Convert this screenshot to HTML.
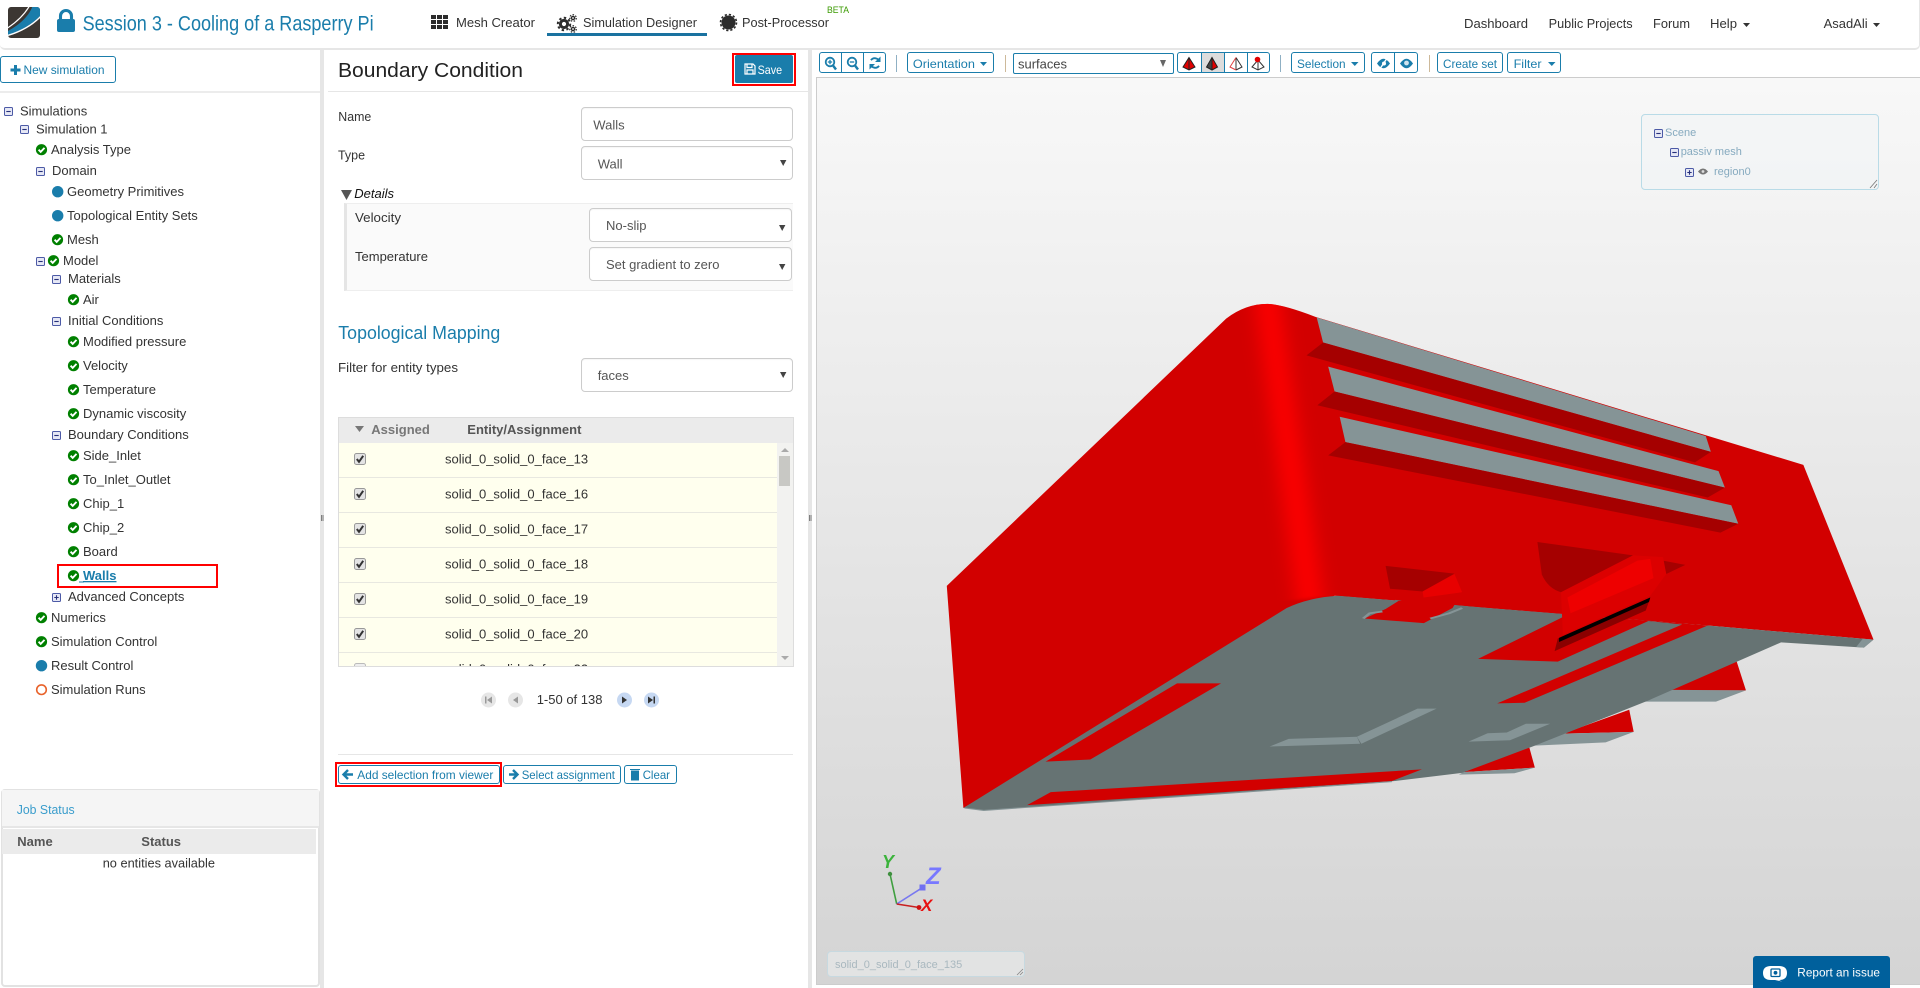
<!DOCTYPE html>
<html lang="en">
<head>
<meta charset="utf-8">
<title>Session 3 - Cooling of a Rasperry Pi</title>
<style>
html,body{margin:0;padding:0;width:1920px;height:988px;overflow:hidden;background:#fff}
body{position:relative;font-family:"Liberation Sans",sans-serif;font-size:13px;color:#333}
.b{position:absolute;box-sizing:border-box}
.btn{border:1px solid #1a7dab;border-radius:3px;background:#fff}
.field{border:1px solid #ccc;border-radius:4px;background:#fff;box-shadow:inset 0 1px 1px rgba(0,0,0,.04)}
.row{left:339px;width:438px;height:35px;background:#ffffee;border-bottom:1px solid #e8e8e0}
svg.ov{position:absolute;left:0;top:0}
svg text{font-family:"Liberation Sans",sans-serif;font-size:13px;fill:#333}
.bl{fill:#1a7dab !important;font-size:12px !important}
.hb{font-weight:bold}
</style>
</head>
<body>
<!-- header -->
<div class="b" style="left:0;top:0;width:1920px;height:50px;background:#fff;border-bottom:2px solid #e6e6e6;border-right:1px solid #e6e6e6;border-radius:0 0 5px 5px"></div>
<div class="b" style="left:547px;top:33px;width:160px;height:3px;background:#1a72a0"></div>
<!-- splitters -->
<div class="b" style="left:320px;top:50px;width:4px;height:938px;background:#e6e6e6"></div>
<div class="b" style="left:808px;top:50px;width:4px;height:938px;background:#e6e6e6"></div>
<div class="b" style="left:0;top:91px;width:320px;height:2px;background:#ececec"></div>
<div class="b" style="left:328px;top:91px;width:480px;height:1px;background:#e6e6e6"></div>
<!-- left -->
<div class="b btn" style="left:0;top:56px;width:116px;height:27px"></div>
<div class="b" style="left:1px;top:789px;width:319px;height:198px;border:2px solid #e2e2e2;border-radius:4px;background:#fff"></div>
<div class="b" style="left:2px;top:790px;width:317px;height:38px;background:#f5f5f5;border-bottom:2px solid #e6e6e6"></div>
<div class="b" style="left:2px;top:829px;width:314px;height:25px;background:#ebebeb"></div>
<div class="b" style="left:57px;top:564px;width:161px;height:24px;border:2px solid #f00"></div>
<!-- center -->
<div class="b" style="left:732px;top:53px;width:64px;height:33px;border:2px solid #f00"></div>
<div class="b" style="left:735px;top:55px;width:58px;height:28px;background:#1a7dab;border-radius:2px"></div>
<div class="b field" style="left:581px;top:107px;width:212px;height:34px"></div>
<div class="b field" style="left:581px;top:146px;width:212px;height:34px"></div>
<div class="b" style="left:344px;top:203px;width:449px;height:88px;background:#fafafa;border-left:3px solid #e5e5e5;border-top:1px solid #eee;border-bottom:1px solid #eee"></div>
<div class="b field" style="left:589px;top:208px;width:203px;height:34px"></div>
<div class="b field" style="left:589px;top:247px;width:203px;height:34px"></div>
<div class="b field" style="left:581px;top:358px;width:212px;height:34px"></div>
<!-- table -->
<div class="b" style="left:338px;top:417px;width:456px;height:250px;border:1px solid #ddd;overflow:hidden;background:#fff">
  <div class="b" style="left:0;top:0;width:454px;height:25px;background:#ebebeb"></div>
  <div class="b row" style="left:0;top:25px"></div>
  <div class="b row" style="left:0;top:60px"></div>
  <div class="b row" style="left:0;top:95px"></div>
  <div class="b row" style="left:0;top:130px"></div>
  <div class="b row" style="left:0;top:165px"></div>
  <div class="b row" style="left:0;top:200px"></div>
  <div class="b" style="left:0;top:235px;width:438px;height:15px;background:#ffffee"></div>
  <div class="b" style="left:438px;top:25px;width:16px;height:225px;background:#f2f2f0"></div>
  <div class="b" style="left:440px;top:38px;width:11px;height:30px;background:#c8c8c4"></div>
</div>
<div class="b" style="left:338px;top:754px;width:455px;height:1px;background:#e6e6e6"></div>
<div class="b" style="left:335px;top:762px;width:167px;height:25px;border:2px solid #f00"></div>
<div class="b btn" style="left:338px;top:765px;width:162px;height:19px"></div>
<div class="b btn" style="left:503px;top:765px;width:118px;height:19px"></div>
<div class="b btn" style="left:624px;top:765px;width:53px;height:19px"></div>
<!-- toolbar -->
<div class="b btn" style="left:819px;top:52px;width:67px;height:21px"></div>
<div class="b" style="left:841px;top:52px;width:1px;height:21px;background:#1a7dab"></div>
<div class="b" style="left:863px;top:52px;width:1px;height:21px;background:#1a7dab"></div>
<div class="b" style="left:896px;top:55px;width:1px;height:17px;background:#8fb0c4"></div>
<div class="b btn" style="left:907px;top:52px;width:87px;height:21px"></div>
<div class="b" style="left:1005px;top:55px;width:1px;height:17px;background:#cdb99a"></div>
<div class="b btn" style="left:1013px;top:53px;width:161px;height:21px;border-radius:2px"></div>
<div class="b btn" style="left:1177px;top:52px;width:93px;height:21px"></div>
<div class="b" style="left:1201px;top:53px;width:23px;height:19px;background:#dcdcdc"></div>
<div class="b" style="left:1201px;top:52px;width:1px;height:21px;background:#1a7dab"></div>
<div class="b" style="left:1224px;top:52px;width:1px;height:21px;background:#1a7dab"></div>
<div class="b" style="left:1247px;top:52px;width:1px;height:21px;background:#1a7dab"></div>
<div class="b" style="left:1280px;top:55px;width:1px;height:17px;background:#8fb0c4"></div>
<div class="b btn" style="left:1291px;top:52px;width:74px;height:21px"></div>
<div class="b btn" style="left:1371px;top:52px;width:47px;height:21px"></div>
<div class="b" style="left:1394px;top:52px;width:1px;height:21px;background:#1a7dab"></div>
<div class="b" style="left:1429px;top:55px;width:1px;height:17px;background:#cdb99a"></div>
<div class="b btn" style="left:1437px;top:52px;width:66px;height:21px"></div>
<div class="b btn" style="left:1507px;top:52px;width:54px;height:21px"></div>
<!-- viewer -->
<div class="b" style="left:816px;top:77px;width:1104px;height:908px;border:1px solid #ccc;border-right:0;background:linear-gradient(#f8f8f8,#d4d4d4)"></div>
<div class="b" style="left:1641px;top:114px;width:238px;height:76px;border:1px solid #b9dbe7;border-radius:4px;background:rgba(240,244,245,.55)"></div>
<div class="b" style="left:827px;top:951px;width:198px;height:26px;border:1px solid #c7d9e0;border-radius:4px;background:#e2e3e3"></div>
<div class="b" style="left:1753px;top:956px;width:137px;height:32px;background:#00609c;border-radius:3px 3px 0 0"></div>

<svg class="ov" width="1920" height="988" viewBox="0 0 1920 988" xmlns="http://www.w3.org/2000/svg">
<defs>
  <g id="m"><rect x=".5" y=".5" width="8" height="8" rx="1" fill="#e6e8f5" stroke="#4c5aa6"/><path d="M2.3 4.5h4.4" stroke="#26307a" stroke-width="1.1"/></g>
  <g id="p"><rect x=".5" y=".5" width="8" height="8" rx="1" fill="#e6e8f5" stroke="#4c5aa6"/><path d="M2.3 4.5h4.4M4.5 2.3v4.4" stroke="#26307a" stroke-width="1.1"/></g>
  <g id="c"><circle r="5.6" fill="#008000"/><path d="M-2.9 0 L-.8 2.2 L3 -1.8" fill="none" stroke="#fff" stroke-width="1.9"/></g>
  <g id="d"><circle r="5.7" fill="#1a7dab"/></g>
  <g id="k"><rect x=".5" y=".5" width="11" height="11" rx="2" fill="#e4e4e4" stroke="#999"/><path d="M2.8 6 L5 8.8 L9.2 2.8" fill="none" stroke="#333" stroke-width="2"/></g>
  <filter id="bl" x="-60%" y="-10%" width="220%" height="120%"><feGaussianBlur stdDeviation="14 2"/></filter>
  <clipPath id="shell"><path d="M42 872 L480 110 Q510 68 545 68 Q570 70 620 105 L1385 527 L1495 1025 L1235 985 L650 900 L68 1505Z"/></clipPath>
  <clipPath id="tbl"><rect x="339" y="418" width="454" height="248"/></clipPath>
  <clipPath id="lg"><rect x="8" y="7" width="32" height="31" rx="3"/></clipPath>
</defs>

<!-- logo -->
<g clip-path="url(#lg)">
<rect x="8" y="7" width="32" height="31" fill="#3c3733"/>
<path d="M6 32 C18 26 29 17 33 5 L42 5 L42 14 C32 25 20 31 6 36Z" fill="#1a7dab"/>
<path d="M6 29 C17 22 25 14 30 5" fill="none" stroke="#fff" stroke-width="1.2"/>
<path d="M6 36 C20 32 32 26 42 15" fill="none" stroke="#fff" stroke-width="1.4"/>
</g>
<!-- lock -->
<rect x="57" y="19" width="18" height="13" rx="2" fill="#1a7dab"/>
<path d="M60.5 19.5 V16 a5.5 5.5 0 0 1 11 0 V19.5" fill="none" stroke="#1a7dab" stroke-width="3.1"/>
<text x="82.6" y="30.5" style="font-size:21px;fill:#1a7dab" textLength="291" lengthAdjust="spacingAndGlyphs">Session 3 - Cooling of a Rasperry Pi</text>
<!-- nav icons -->
<g fill="#2c2c2c"><rect x="431" y="15" width="5" height="4"/><rect x="437" y="15" width="5" height="4"/><rect x="443" y="15" width="5" height="4"/><rect x="431" y="20" width="5" height="4"/><rect x="437" y="20" width="5" height="4"/><rect x="443" y="20" width="5" height="4"/><rect x="431" y="25" width="5" height="4"/><rect x="437" y="25" width="5" height="4"/><rect x="443" y="25" width="5" height="4"/></g>
<g fill="none" stroke="#2c2c2c"><circle cx="564" cy="24" r="3.6" stroke-width="3"/><circle cx="564" cy="24" r="6.2" stroke-width="2" stroke-dasharray="2.4 2.4"/><circle cx="573" cy="18" r="1.6" stroke-width="1.4"/><circle cx="573" cy="18" r="3.3" stroke-width="1.2" stroke-dasharray="1.5 1.5"/><circle cx="573" cy="29" r="1.6" stroke-width="1.4"/><circle cx="573" cy="29" r="3.3" stroke-width="1.2" stroke-dasharray="1.5 1.5"/></g>
<circle cx="728.5" cy="22.5" r="7" fill="#2c2c2c"/><circle cx="728.5" cy="22.5" r="8" fill="none" stroke="#2c2c2c" stroke-width="1.6" stroke-dasharray="2.2 2"/>
<g>
<text x="456" y="27" textLength="79" lengthAdjust="spacingAndGlyphs">Mesh Creator</text>
<text x="583" y="27" textLength="114" lengthAdjust="spacingAndGlyphs">Simulation Designer</text>
<text x="742" y="27" textLength="87" lengthAdjust="spacingAndGlyphs">Post-Processor</text>
<text x="827" y="13" style="font-size:9px;fill:#3a9a00" textLength="22" lengthAdjust="spacingAndGlyphs">BETA</text>
<text x="1464" y="28" textLength="64" lengthAdjust="spacingAndGlyphs">Dashboard</text>
<text x="1548.6" y="28" textLength="84" lengthAdjust="spacingAndGlyphs">Public Projects</text>
<text x="1653" y="28" textLength="37" lengthAdjust="spacingAndGlyphs">Forum</text>
<text x="1710" y="28" textLength="27" lengthAdjust="spacingAndGlyphs">Help</text>
<text x="1823.6" y="28" textLength="44" lengthAdjust="spacingAndGlyphs">AsadAli</text>
</g>
<path d="M1743 23h7l-3.5 4zM1873 23h7l-3.5 4z" fill="#333"/>

<!-- new simulation -->
<path d="M15.5 65v10M10.5 70h10" stroke="#1a7dab" stroke-width="3"/>
<text x="23.5" y="74" class="bl" textLength="81" lengthAdjust="spacingAndGlyphs">New simulation</text>

<!-- tree -->
<use href="#m" x="4" y="107"/><text x="20" y="115.3">Simulations</text>
<use href="#m" x="20" y="125"/><text x="36" y="133.3">Simulation 1</text>
<use href="#c" x="41.5" y="149.7"/><text x="51" y="154">Analysis Type</text>
<use href="#m" x="36" y="167"/><text x="52" y="175">Domain</text>
<use href="#d" x="57.7" y="191.7"/><text x="67" y="196">Geometry Primitives</text>
<use href="#d" x="57.7" y="215.7"/><text x="67" y="220">Topological Entity Sets</text>
<use href="#c" x="57.5" y="239.7"/><text x="67" y="244">Mesh</text>
<use href="#m" x="36" y="257"/><use href="#c" x="53.5" y="260.7"/><text x="63" y="265">Model</text>
<use href="#m" x="52" y="275"/><text x="68" y="283">Materials</text>
<use href="#c" x="73.5" y="299.7"/><text x="83" y="304">Air</text>
<use href="#m" x="52" y="317"/><text x="68" y="325">Initial Conditions</text>
<use href="#c" x="73.5" y="341.7"/><text x="83" y="346">Modified pressure</text>
<use href="#c" x="73.5" y="365.7"/><text x="83" y="370">Velocity</text>
<use href="#c" x="73.5" y="389.7"/><text x="83" y="394">Temperature</text>
<use href="#c" x="73.5" y="413.7"/><text x="83" y="418">Dynamic viscosity</text>
<use href="#m" x="52" y="431"/><text x="68" y="439">Boundary Conditions</text>
<use href="#c" x="73.5" y="455.7"/><text x="83" y="460">Side_Inlet</text>
<use href="#c" x="73.5" y="479.7"/><text x="83" y="484">To_Inlet_Outlet</text>
<use href="#c" x="73.5" y="503.7"/><text x="83" y="508">Chip_1</text>
<use href="#c" x="73.5" y="527.7"/><text x="83" y="532">Chip_2</text>
<use href="#c" x="73.5" y="551.7"/><text x="83" y="556">Board</text>
<use href="#c" x="73.5" y="575.7"/><text x="83" y="580" style="fill:#1a7dab;font-weight:bold;text-decoration:underline">Walls</text>
<path d="M79 582h5" stroke="#1a7dab"/>
<use href="#p" x="52" y="593"/><text x="68" y="601">Advanced Concepts</text>
<use href="#c" x="41.5" y="617.7"/><text x="51" y="622">Numerics</text>
<use href="#c" x="41.5" y="641.7"/><text x="51" y="646">Simulation Control</text>
<use href="#d" x="41.5" y="665.7"/><text x="51" y="670">Result Control</text>
<circle cx="41.5" cy="689.7" r="4.8" fill="none" stroke="#e8622a" stroke-width="1.6"/><text x="51" y="694">Simulation Runs</text>

<!-- job status -->
<text x="16.7" y="814" style="fill:#3a9dcc" textLength="58" lengthAdjust="spacingAndGlyphs">Job Status</text>
<text x="17.3" y="846" class="hb" style="fill:#555">Name</text>
<text x="141.3" y="846" class="hb" style="fill:#555">Status</text>
<text x="102.7" y="867.7" textLength="112.3" lengthAdjust="spacingAndGlyphs">no entities available</text>

<!-- center -->
<text x="338" y="77" style="font-size:20px;fill:#222" textLength="185" lengthAdjust="spacingAndGlyphs">Boundary Condition</text>
<path d="M745 64h8l2 2v8h-10zM747 64v3.5h5V64M747 74v-4h6v4" fill="none" stroke="#fff" stroke-width="1.2"/>
<text x="757.6" y="74" style="font-size:12px;fill:#fff" textLength="24.5" lengthAdjust="spacingAndGlyphs">Save</text>
<text x="338.3" y="121" textLength="33" lengthAdjust="spacingAndGlyphs">Name</text>
<text x="338" y="159.5" textLength="27" lengthAdjust="spacingAndGlyphs">Type</text>
<text x="593.3" y="129.3" style="fill:#555">Walls</text>
<text x="597.7" y="168.3" style="fill:#555">Wall</text>
<path d="M780 160h6.4l-3.2 6zM779 225h6.4l-3.2 6zM779 264h6.4l-3.2 6zM780 372h6.4l-3.2 6z" fill="#444"/>
<path d="M341 190h11l-5.5 10z" fill="#555"/>
<text x="354.3" y="198" style="font-style:italic;fill:#111">Details</text>
<text x="355" y="222" textLength="46" lengthAdjust="spacingAndGlyphs">Velocity</text>
<text x="355" y="261" textLength="73" lengthAdjust="spacingAndGlyphs">Temperature</text>
<text x="606" y="230" style="fill:#555">No-slip</text>
<text x="606" y="269" style="fill:#555">Set gradient to zero</text>
<text x="338.3" y="339" style="font-size:18px;fill:#1a7dab" textLength="162" lengthAdjust="spacingAndGlyphs">Topological Mapping</text>
<text x="338" y="372" textLength="120" lengthAdjust="spacingAndGlyphs">Filter for entity types</text>
<text x="597.7" y="380" style="fill:#555">faces</text>

<!-- table content -->
<path d="M355 426h9l-4.5 6z" fill="#777"/>
<text x="371.3" y="434" class="hb" style="fill:#777">Assigned</text>
<text x="467.3" y="434" class="hb" style="fill:#555">Entity/Assignment</text>
<g clip-path="url(#tbl)">
<use href="#k" x="354" y="453"/><text x="445" y="463.6">solid_0_solid_0_face_13</text>
<use href="#k" x="354" y="488"/><text x="445" y="498.6">solid_0_solid_0_face_16</text>
<use href="#k" x="354" y="523"/><text x="445" y="533.6">solid_0_solid_0_face_17</text>
<use href="#k" x="354" y="558"/><text x="445" y="568.6">solid_0_solid_0_face_18</text>
<use href="#k" x="354" y="593"/><text x="445" y="603.6">solid_0_solid_0_face_19</text>
<use href="#k" x="354" y="628"/><text x="445" y="638.6">solid_0_solid_0_face_20</text>
<rect x="354.5" y="663.5" width="11" height="11" rx="2" fill="#eee" stroke="#bbb"/><text x="445" y="673.6">solid_0_solid_0_face_22</text>
</g>
<path d="M781 452l4-4 4 4zM781 656l4 4 4-4z" fill="#aaa"/>

<!-- pagination -->
<circle cx="488.5" cy="700" r="7.5" fill="#e6e6e6"/><path d="M485 696.5h1.5v7H485zM492 696.5v7l-5-3.5z" fill="#999"/>
<circle cx="515.5" cy="700" r="7.5" fill="#e6e6e6"/><path d="M518 696.5v7l-5-3.5z" fill="#999"/>
<text x="536.7" y="704">1-50 of 138</text>
<circle cx="624.5" cy="700" r="7.5" fill="#c6d8f2"/><path d="M622 696.5v7l5-3.5z" fill="#333"/>
<circle cx="651.5" cy="700" r="7.5" fill="#c6d8f2"/><path d="M648 696.5v7l5-3.5zM653.5 696.5h1.5v7h-1.5z" fill="#333"/>

<!-- bottom buttons -->
<path d="M348 770l-4.5 4.5 4.5 4.5M344 774.5h9" fill="none" stroke="#1a7dab" stroke-width="2.4"/>
<text x="357.3" y="779" class="bl" textLength="136" lengthAdjust="spacingAndGlyphs">Add selection from viewer</text>
<path d="M513 770l4.5 4.5-4.5 4.5M509 774.5h8" fill="none" stroke="#1a7dab" stroke-width="2.4"/>
<text x="521.7" y="779" class="bl" textLength="93.3" lengthAdjust="spacingAndGlyphs">Select assignment</text>
<path d="M631.5 771h7v9h-7zM630 769.5h10" fill="#1a7dab" stroke="#1a7dab"/>
<text x="642.7" y="779" class="bl" textLength="27.3" lengthAdjust="spacingAndGlyphs">Clear</text>

<!-- splitter handles -->
<path d="M321.5 515v6M323 515v6M809.5 515v6M811 515v6" stroke="#666" stroke-width=".8"/>

<!-- toolbar icons -->
<g fill="none" stroke="#1a7dab">
  <circle cx="830" cy="62" r="4.3" stroke-width="1.8"/><path d="M833 65.5l3 4" stroke-width="2.4"/><path d="M827.8 62h4.4M830 59.8v4.4" stroke-width="1.3"/>
  <circle cx="852" cy="62" r="4.3" stroke-width="1.8"/><path d="M855 65.5l3 4" stroke-width="2.4"/><path d="M849.8 62h4.4" stroke-width="1.3"/>
  <path d="M879.3 61.5A4.7 4.7 0 0 0 871 60.2M870.7 64.5A4.7 4.7 0 0 0 879 65.8" stroke-width="1.9"/>
</g>
<path d="M880.5 56.5v5.5h-5.5zM869.5 69.5V64h5.5z" fill="#1a7dab"/>
<text x="912.9" y="68" class="bl" textLength="62" lengthAdjust="spacingAndGlyphs">Orientation</text>
<path d="M980 62h7l-3.5 4zM1351 62h7.5l-3.7 4zM1548 62h7.5l-3.7 4z" fill="#1a7dab"/>
<text x="1018" y="68.3" style="fill:#444" textLength="49" lengthAdjust="spacingAndGlyphs">surfaces</text>
<path d="M1160 60h6l-3 7z" fill="#666"/>
<!-- tetra -->
<path d="M1189 57.5l-6 9.5 6 3 6-3z" fill="#e00000"/><path d="M1189 57.5l-6 9.5 6 3 6-3zM1189 57.5v12.5" fill="none" stroke="#222" stroke-width="1"/>
<path d="M1212 57.5l-5.5 9.5 5.5 3z" fill="#444"/><path d="M1212 57.5l5.5 9.5-5.5 3z" fill="#e00000"/><path d="M1212 57.5l-5.5 9.5 5.5 3 5.5-3zM1212 57.5v12.5" fill="none" stroke="#222" stroke-width="1"/>
<path d="M1236 57.5l-6 9.5 6 3 6-3z" fill="#fff"/><path d="M1236 57.5l6 9.5-6 3M1236 57.5v12.5" fill="none" stroke="#333" stroke-width="1"/><path d="M1236 57.5l-6 9.5 6 3" fill="none" stroke="#e04040" stroke-width="1"/>
<path d="M1258 60l-6 7 6 3 6-3z" fill="#fff" stroke="#333" stroke-width="1"/><path d="M1258 60v10" stroke="#333" stroke-width="1"/><circle cx="1257.5" cy="59.5" r="2.8" fill="#e00000"/>
<text x="1297" y="68" class="bl" textLength="48.6" lengthAdjust="spacingAndGlyphs">Selection</text>
<path d="M1377 63.5Q1383.5 54 1390 63.5Q1383.5 73 1377 63.5z" fill="#1a7dab"/><circle cx="1384" cy="63.5" r="2" fill="#fff"/><path d="M1379.5 69.5l8-12" stroke="#fff" stroke-width="1.4"/>
<path d="M1400 63.5Q1406.5 54 1413 63.5Q1406.5 73 1400 63.5z" fill="#1a7dab"/><circle cx="1406.5" cy="63" r="2.4" fill="#cfe3ee"/>
<text x="1443" y="68" class="bl" textLength="54" lengthAdjust="spacingAndGlyphs">Create set</text>
<text x="1513.6" y="68" class="bl" textLength="28" lengthAdjust="spacingAndGlyphs">Filter</text>

<!-- scene box -->
<use href="#m" x="1654" y="129"/>
<text x="1665" y="136" style="font-size:11px;fill:#86aabf">Scene</text>
<use href="#m" x="1670" y="148"/>
<text x="1680.7" y="155" style="font-size:11px;fill:#86aabf">passiv mesh</text>
<use href="#p" x="1685" y="168"/>
<path d="M1698 171.5q5-6 10 0q-5 6-10 0z" fill="#777"/><circle cx="1703" cy="171.5" r="1.4" fill="#ddd"/>
<text x="1714" y="175" style="font-size:11px;fill:#86aabf">region0</text>
<path d="M1877 180l-7 8M1877 184l-3 4" stroke="#777" stroke-width=".8"/>

<!-- 3D model -->
<g transform="translate(920 280) scale(.6378 .3508)">
  <!-- rear tabs -->
  <path d="M1280 1085 L1295 1170 L1160 1170 L1120 1180Z" fill="#d20000"/>
  <path d="M1295 1170 L1248 1202 L1130 1202 L1160 1168Z" fill="#859496"/>
  <path d="M1112 1225 L1119 1288 L1008 1293Z" fill="#d20000"/>
  <path d="M1119 1288 L1075 1318 L955 1328 L1008 1293Z" fill="#859496"/>
  <path d="M955 1330 L964 1390 L852 1403Z" fill="#d20000"/>
  <path d="M964 1390 L932 1406 L845 1410 L852 1403Z" fill="#859496"/>
  <!-- shell -->
  <path d="M42 872 L480 110 Q510 68 545 68 Q570 70 620 105 L1385 527 L1495 1025 L1235 985 L650 900 L68 1505Z" fill="#d20000"/>
  <g clip-path="url(#shell)">
    <path d="M525 60 L565 60 L632 900 L590 915Z" fill="#fb0000" filter="url(#bl)"/>
  </g>
  <!-- bottom gray -->
  <path d="M68 1505 L575 935 Q610 905 655 900 L1235 985 L1495 1025 L1480 1048 L1350 1033 L1140 1200 L960 1330 L850 1405 L745 1428 L100 1512 Z" fill="#667373"/>
  <path d="M1495 1025 L1480 1048 L1468 1046 L1478 1023Z" fill="#859496"/>
  <!-- clip frame red -->
  <path d="M860 930 L1235 985 L948 1205 L905 1207 L1195 982 L1142 972 L1000 1088 L875 1080 L1020 950Z" fill="#d20000"/>
  <!-- slots -->
  <path d="M622 107 L1232 445 L1240 490 L632 178Z" fill="#859496"/>
  <path d="M632 178 L1240 490 L1215 520 L606 215Z" fill="#a50000"/>
  <path d="M640 247 L1252 545 L1262 592 L650 318Z" fill="#859496"/>
  <path d="M650 318 L1262 592 L1235 620 L623 357Z" fill="#a50000"/>
  <path d="M658 390 L1272 642 L1283 695 L667 462Z" fill="#859496"/>
  <path d="M667 462 L1283 695 L1255 720 L640 500Z" fill="#a50000"/>
  <!-- big clip -->
  <path d="M968 747 L1118 785 L1005 890 Q985 880 975 840Z" fill="#a50000"/>
  <path d="M1165 800 L1200 812 L1170 838Z" fill="#a50000"/>
  <path d="M1118 785 L1165 790 L1170 838 L1145 900 L1008 1012 L1005 890Z" fill="#dc0000"/>
  <path d="M1125 800 L1145 795 L1150 850 L1020 950 L1015 905Z" fill="#ee0000"/>
  <path d="M1000 1022 L1145 905 L1138 942 L995 1058Z" fill="#8a0000"/>
  <path d="M1002 1020 L1145 905 L1143 918 L1002 1032Z" fill="#000"/>
  <!-- small clip -->
  <path d="M730 815 L838 837 L788 888 L737 880Z" fill="#a50000"/>
  <path d="M745 912 L730 935 L695 965 L790 978 L835 935 L860 930Z" fill="#667373"/>
  <path d="M838 838 L788 888 L790 910 L850 890Z" fill="#e80000"/>
  <path d="M750 915 L790 905 L850 890 L835 935 L790 978 L697 965 L730 938Z" fill="#d20000"/>
  <path d="M695 965 L705 950 L725 945 M800 965 L830 950 L850 935" fill="none" stroke="#859496" stroke-width="5"/>
  <!-- bottom stripes -->
  <path d="M403 1150 L472 1150 L267 1367 L197 1373Z" fill="#d20000"/>
  <path d="M205 1460 L787 1395 L740 1428 L168 1497Z" fill="#d20000"/>
  <!-- light patches -->
  <path d="M548 1330 L578 1308 L685 1302 L690 1322Z" fill="#859496"/>
  <path d="M685 1302 L780 1222 L810 1222 L692 1322Z" fill="#859496"/>
  <path d="M860 1316 L890 1292 L920 1290 L950 1265 L988 1265 L925 1312Z" fill="#859496"/>
  <path d="M70 1505 L100 1512 L740 1430" fill="none" stroke="#859496" stroke-width="3"/>
</g>

<!-- axes -->
<path d="M896.7 904 L890 874" stroke="#3f9f3f" stroke-width="1.6"/><circle cx="890" cy="874" r="2.2" fill="#3f8f3f"/>
<path d="M896.7 904 L922.3 887.7" stroke="#7878f0" stroke-width="1.6"/><rect x="919.5" y="884.5" width="6" height="6" fill="#7070f0"/>
<path d="M896.7 904 L919 907.5" stroke="#c82020" stroke-width="1.6"/><circle cx="919" cy="907.5" r="2.4" fill="#d01010"/>
<text x="882" y="868" style="font-size:18px;font-weight:bold;font-style:italic;fill:#3bb33b">Y</text>
<text x="926" y="884" style="font-size:24px;font-weight:bold;font-style:italic;fill:#7878ff">Z</text>
<text x="921" y="911" style="font-size:17px;font-weight:bold;font-style:italic;fill:#e81010">X</text>

<!-- selection label -->
<text x="835" y="968" style="font-size:11px;fill:#a9b8bf">solid_0_solid_0_face_135</text>
<path d="M1023 969l-6 6M1023 972l-3 3" stroke="#888" stroke-width=".8"/>

<!-- report -->
<path d="M1763 973q0-7 8-7h8q8 0 8 7t-8 7l3 1.5-7-1.5h-4q-8 0-8-7z" fill="#fff"/>
<rect x="1771" y="969" width="9" height="7.5" rx="1" fill="none" stroke="#00609c" stroke-width="1.3"/><circle cx="1775.5" cy="972.8" r="1.9" fill="#00609c"/>
<text x="1797.3" y="976.7" style="font-size:12px;fill:#fff" textLength="82.7" lengthAdjust="spacingAndGlyphs">Report an issue</text>
</svg>
</body>
</html>
